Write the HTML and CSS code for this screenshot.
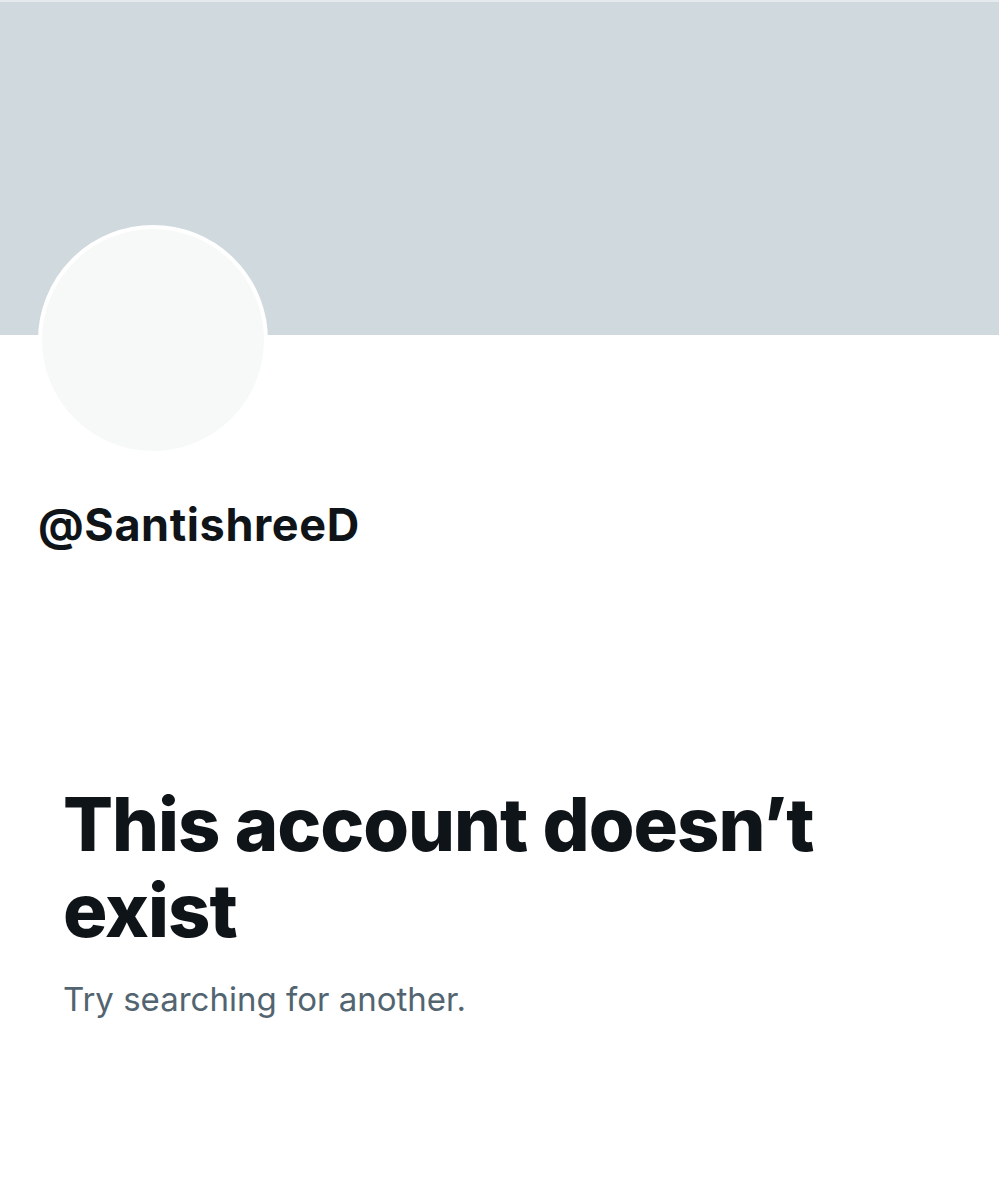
FILE: index.html
```html
<!DOCTYPE html>
<html lang="en">
<head>
<meta charset="utf-8">
<title>Profile</title>
<link rel="stylesheet" href="styles.css">
</head>
<body>
<div class="page">
  <div class="topline"></div>
  <div class="banner"></div>
  <div class="profile">
    <div class="avatar"></div>
    <div class="handle">@SantishreeD</div>
  </div>
  <div class="empty">
    <h1 class="title">This account doesn’t exist</h1>
    <p class="subtitle">Try searching for another.</p>
  </div>
</div>
</body>
</html>
```
FILE: styles.css
```css
html, body {
  margin: 0;
  padding: 0;
  background: #ffffff;
}
body {
  font-family: Inter, "Noto Sans", "Liberation Sans", sans-serif;
  color: #0f1419;
}
.page {
  width: 999px;
  height: 1200px;
  overflow: hidden;
}
.topline {
  height: 2px;
  background: #e4eaee;
}
.banner {
  height: 333px;
  background: #cfd9de;
}
.profile {
  padding-left: 38px;
}
.avatar {
  width: 222px;
  height: 222px;
  margin-top: -110px;
  border-radius: 50%;
  border: 4px solid #ffffff;
  background: #f7f9f9;
}
.handle {
  margin-top: 40px;
  font-size: 45px;
  line-height: 60px;
  font-weight: 700;
  letter-spacing: 0.6px;
}
.empty {
  padding: 0 63px;
  margin-top: 226px;
}
.title {
  margin: 0;
  font-size: 74px;
  line-height: 86px;
  font-weight: 800;
  letter-spacing: -1px;
  max-width: 800px;
}
.subtitle {
  margin: 24px 0 0;
  font-size: 33px;
  line-height: 44px;
  font-weight: 400;
  color: #536471;
}
```
